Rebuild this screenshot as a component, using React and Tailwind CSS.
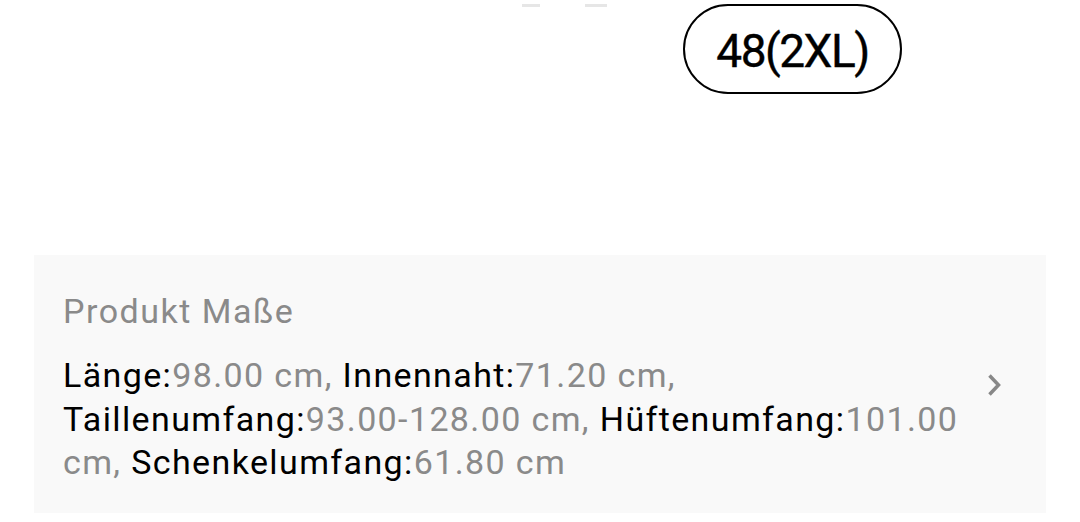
export default function App() {
  const font = { fontFamily: 'Roboto, "Noto Sans", Arial, sans-serif' };
  return (
    <div className="relative w-[1080px] h-[522px] bg-white overflow-hidden" style={font}>
      <div className="absolute left-[522px] top-[4px] w-[18px] h-[3px] bg-[#e6e6e6]" />
      <div className="absolute left-[585px] top-[4px] w-[22px] h-[3px] bg-[#e6e6e6]" />
      <div className="h-[255px] pt-[4px] pl-[683px]">
        <div className="w-[219px] h-[90px] rounded-full border-[2.5px] border-black flex items-center justify-center">
          <span className="text-[46px] leading-none text-black tracking-[-1.5px] pt-[3px] [-webkit-text-stroke:0.4px_black]">48(2XL)</span>
        </div>
      </div>
      <div className="ml-[34px] w-[1012px] h-[258px] bg-[#f9f9f9] flex items-start pl-[29px] pr-[44px]">
        <div className="flex-1 pt-[36px]">
          <div className="text-[34px] leading-[40px] tracking-[1.5px] text-[#8a8a8a]">Produkt Maße</div>
          <div className="mt-[23px] text-[34px] leading-[43.5px] tracking-[1.38px] text-[#8a8a8a]">
            <span className="text-black">Länge:</span>98.00 cm, <span className="text-black">Innennaht:</span>71.20 cm,<br />
            <span className="text-black">Taillenumfang:</span>93.00-128.00 cm, <span className="text-black">Hüftenumfang:</span>101.00<br />
            cm, <span className="text-black">Schenkelumfang:</span>61.80 cm
          </div>
        </div>
        <div className="pt-[118px]">
          <svg width="16" height="24" viewBox="0 0 16 24">
            <path d="M3.5 2.5 L12.5 12 L3.5 21.5" fill="none" stroke="#888" strokeWidth="3.5" />
          </svg>
        </div>
      </div>
    </div>
  );
}
